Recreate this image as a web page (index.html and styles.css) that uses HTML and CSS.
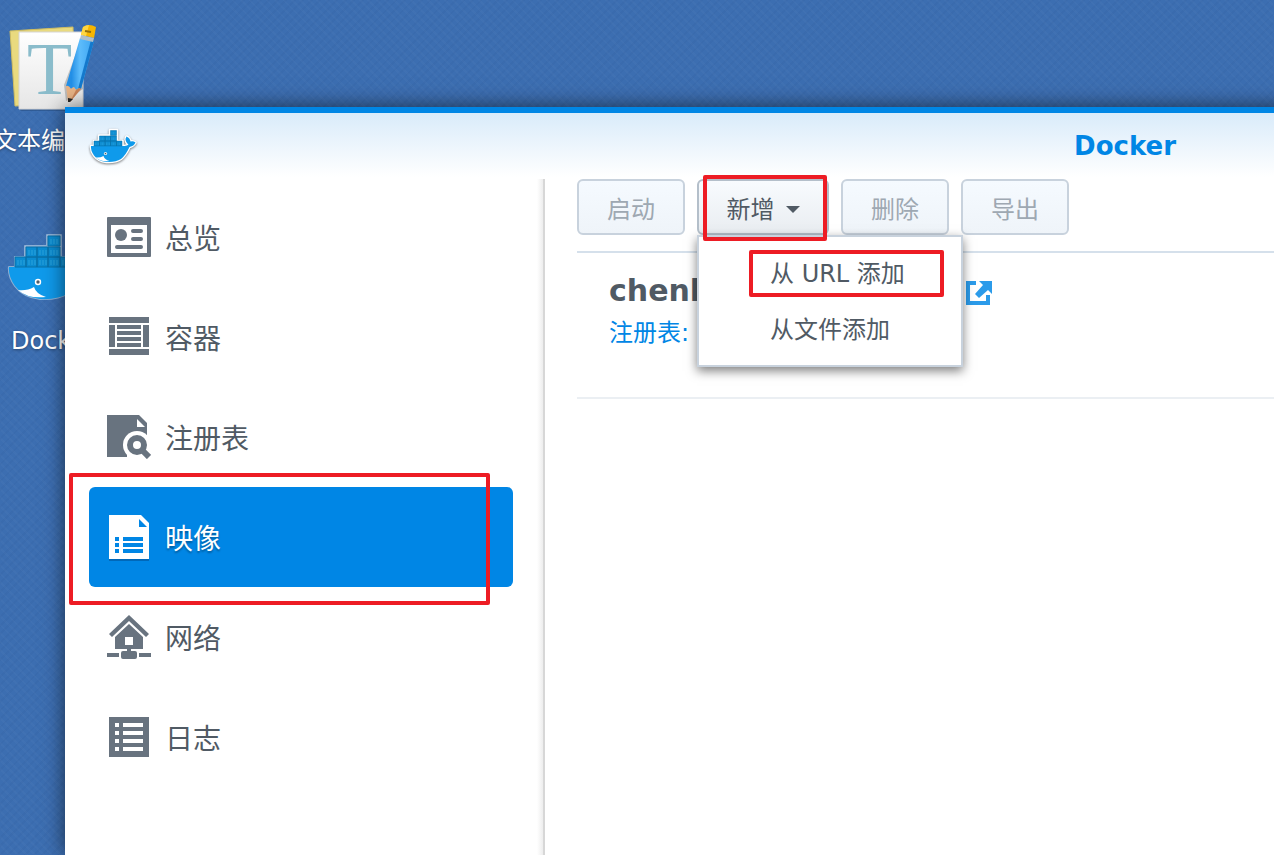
FILE: index.html
```html
<!DOCTYPE html>
<html lang="zh-CN">

<head>
    <meta charset="UTF-8">
    <meta name="viewport" content="width=device-width, initial-scale=1.0">
    <title>Docker</title>
    <link rel="stylesheet" href="styles.css">
</head>

<body>
    <svg class="defs" aria-hidden="true">
        <symbol id="whale" viewBox="-3 -3 96 72">
            <path class="whale-line" d="M39 1H53V23H64V33H68Q74 32 76 30Q67 22 72 14Q79 17 80 24Q85 22 90 26Q87 33 78 35Q70 52 61 59Q50 66 32 65Q15 63 7 52Q0 42 1 33H7V23H17V12H39Z" />
            <path fill="#0f9aeb" d="M1 33H68Q74 32 76 30Q67 22 72 14Q79 17 80 24Q85 22 90 26Q87 33 78 35Q70 52 61 59Q50 66 32 65Q15 63 7 52Q0 42 1 33Z" />
            <path fill="#0b8bd0" stroke="#0870a8" d="M40 2H52V12H40ZM18 13H29V23H18ZM29 13H40V23H29ZM40 13H52V23H40ZM7 23H18V33H7ZM18 23H29V33H18ZM29 23H40V33H29ZM40 23H52V33H40ZM52 23H63V33H52Z" />
            <path stroke="#2ba3dc" d="M43 5V10M46 5V10M49 5V10M21 16V21M24 16V21M27 16V21M32 16V21M35 16V21M38 16V21M43 16V21M46 16V21M49 16V21M10 26V31M13 26V31M16 26V31M21 26V31M24 26V31M27 26V31M32 26V31M35 26V31M38 26V31M43 26V31M46 26V31M49 26V31M55 26V31M58 26V31" />
            <path fill="#fff" d="M10 56Q19 57 26 53Q28 60 38 63Q20 65 10 56Z" />
            <circle cx="30" cy="48" r="3.2" fill="#fff" />
            <circle cx="30" cy="48" r="1.7" fill="#535f68" />
        </symbol>
    </svg>

    <!-- 桌面图标 -->
    <div class="desktop">
        <a class="shortcut" href="#">
            <span class="shortcut-icon">
                <svg width="88" height="88" viewBox="0 0 88 88" aria-hidden="true">
                    <defs>
                        <linearGradient id="paper" x2="0" y2="1">
                            <stop offset="0" stop-color="#fff" />
                            <stop offset="1" stop-color="#e6e6e6" />
                        </linearGradient>
                        <linearGradient id="pen">
                            <stop offset="0.2" stop-color="#238fe6" />
                            <stop offset="0.5" stop-color="#5dbcfb" />
                            <stop offset="1" stop-color="#3ba4f2" />
                        </linearGradient>
                    </defs>
                    <path fill="#234a7c" opacity=".5" d="M8 84L12 88H75V84Z" />
                    <path fill="#e9da7f" stroke="#cfbd62" d="M1 8L64 4L66 80L6 83Z" />
                    <path fill="url(#paper)" stroke="#d5d5d5" d="M10 9H74V86H10Z" />
                    <text class="letter" x="18" y="71">T</text>
                    <path fill="#000" opacity=".2" d="M71 20L55 62L57 78L74 66Z" />
                    <path fill="url(#pen)" d="M71 15L85 18L72 66L67 67L65 64L62 66L57 63Z" />
                    <path fill="#1479cc" d="M82 17L85 18L72 66L69 66Z" />
                    <path fill="#e8b385" d="M57 63Q60 62 62 66Q65 62 67 67Q70 64 72 66L61 79H59Z" />
                    <path fill="#c98358" d="M67 67Q70 64 72 66L61 79Z" />
                    <path fill="#282828" d="M59 75L64 76L61 79H59Z" />
                    <path fill="#f7b500" d="M74 4Q80 0 87 4L85 15L72 12Z" />
                    <path fill="#ffd640" d="M74 4Q77 2 80 2L77 13L72 12Z" />
                    <path fill="#aebfca" d="M72 12L85 15L84 19L71 16Z" />
                    <path stroke="#91700e" stroke-width="2" d="M76 8L82 9" />
                </svg>
            </span>
            <span>文本编辑器</span>
        </a>
        <a class="shortcut" href="#">
            <span class="shortcut-icon">
                <svg class="whale-desktop" width="96" height="72" aria-hidden="true"><use href="#whale" /></svg>
            </span>
            <span>Docker</span>
        </a>
    </div>

    <!-- Docker 窗口 -->
    <div class="window">
        <header class="titlebar">
            <svg class="whale-title" width="48" height="36" aria-hidden="true"><use href="#whale" /></svg>
            <h1>Docker</h1>
        </header>
        <div class="body">
            <nav class="sidebar">
                <a class="nav-item" href="#">
                    <svg width="44" height="44" viewBox="0 0 44 44" aria-hidden="true">
                        <rect y="2" width="44" height="40" rx="1" />
                        <path fill="#fff" d="M4 10H40V38H4Z" />
                        <circle cx="14" cy="20" r="6" />
                        <path stroke="#68737f" stroke-width="4" stroke-linecap="round" d="M26 16H34M26 24H34M10 32H34" />
                    </svg>
                    <span>总览</span>
                </a>
                <a class="nav-item" href="#">
                    <svg width="44" height="44" viewBox="0 0 44 44" aria-hidden="true">
                        <path d="M2 2H42V8H2ZM2 10H8V32H2ZM36 10H42V32H36ZM10 10H34V14H10ZM10 16H34V20H10ZM10 22H34V26H10ZM10 28H34V32H10ZM2 34H42V40H2Z" />
                    </svg>
                    <span>容器</span>
                </a>
                <a class="nav-item" href="#">
                    <svg width="44" height="44" viewBox="0 0 44 44" aria-hidden="true">
                        <path d="M0 0H32L40 8V42H0Z" />
                        <path fill="#fff" d="M30 4V12H38Z" />
                        <circle cx="30" cy="30" r="14" fill="#fff" />
                        <path fill="#fff" d="M20 38L24 42H20ZM36 36L44 40V44H32L24 42Z" />
                        <circle cx="30" cy="30" r="7" fill="none" stroke="#68737f" stroke-width="6" />
                        <path stroke="#68737f" stroke-width="6" d="M34 34L42 42" />
                    </svg>
                    <span>注册表</span>
                </a>
                <a class="nav-item active" href="#">
                    <svg width="44" height="44" viewBox="0 0 44 44" aria-hidden="true">
                        <path d="M2 0H34L42 8V44H2Z" />
                        <path fill="#0086e5" d="M32 4V12H40ZM8 22H12V26H8ZM16 22H36V26H16ZM8 28H12V32H8ZM16 28H36V32H16ZM8 34H12V38H8ZM16 34H36V38H16Z" />
                    </svg>
                    <span>映像</span>
                </a>
                <a class="nav-item" href="#">
                    <svg width="44" height="44" viewBox="0 0 44 44" aria-hidden="true">
                        <path d="M22 0L42 19L39 22L22 6L5 22L2 19Z" />
                        <path d="M22 9L36 22V34H24V36H28Q30 36 30 38V42Q30 44 28 44H16Q14 44 14 42V38Q14 36 16 36H20V34H8V22ZM0 38H12V42H0ZM32 38H44V42H32Z" />
                        <path fill="#fff" d="M18 22H26V30H18Z" />
                    </svg>
                    <span>网络</span>
                </a>
                <a class="nav-item" href="#">
                    <svg width="44" height="44" viewBox="0 0 44 44" aria-hidden="true">
                        <path d="M2 2H42V42H2Z" />
                        <path fill="#fff" d="M8 8H12V12H8ZM16 8H36V12H16ZM8 16H12V20H8ZM16 16H36V20H16ZM8 24H12V28H8ZM16 24H36V28H16ZM8 32H12V36H8ZM16 32H36V36H16Z" />
                    </svg>
                    <span>日志</span>
                </a>
            </nav>
            <main class="content">
                <div class="toolbar">
                    <button class="btn" disabled>启动</button>
                    <div class="dropdown">
                        <button class="btn btn-add">新增<span class="arrow"></span></button>
                        <div class="menu">
                            <button class="menu-item">从 URL 添加</button>
                            <button class="menu-item">从文件添加</button>
                            <div class="mark mark-url"></div>
                        </div>
                        <div class="mark mark-add"></div>
                    </div>
                    <button class="btn" disabled>删除</button>
                    <button class="btn" disabled>导出</button>
                </div>
                <div class="image-row">
                    <div class="image-title">
                        <h2>chenl</h2>
                        <a href="#" aria-label="打开">
                            <svg width="28" height="28" viewBox="0 0 28 28" aria-hidden="true">
                                <path fill="#2b9bea" d="M1 2H11V6H5V22H21V16H25V26H1ZM14 2H27V15L23 11L14 19L10 15L18 6Z" />
                            </svg>
                        </a>
                    </div>
                    <a class="registry" href="#">注册表:</a>
                </div>
            </main>
        </div>
    </div>
    <div class="mark mark-image"></div>
</body>

</html>
```

FILE: styles.css
```css
* {
    box-sizing: border-box;
    padding: 0;
    margin: 0;
}

body {
    position: relative;
    height: 100vh;
    overflow: hidden;
    font-family: "DejaVu Sans", "Noto Sans CJK SC", sans-serif;
    font-size: 24px;
    color: #505a64;
    background-color: #3c6eb1;
    background-image: repeating-linear-gradient(45deg, rgba(255, 255, 255, .02) 0 2px, transparent 2px 6px),
        repeating-linear-gradient(-45deg, rgba(0, 20, 70, .03) 0 2px, transparent 2px 6px);
}

a {
    color: inherit;
    text-decoration: none;
}

button {
    font: inherit;
    color: inherit;
}

.defs {
    position: absolute;
    width: 0;
    height: 0;
}

/* 桌面 */
.desktop {
    display: flex;
    flex-direction: column;
    gap: 62px;
    width: 120px;
    margin-left: -7px;
    padding-top: 19px;
}

.shortcut {
    display: flex;
    flex-direction: column;
    align-items: center;
    gap: 10px;
    line-height: 32px;
    color: #fff;
    white-space: nowrap;
    text-shadow: 0 1px 3px rgba(0, 0, 0, .4);
}

.shortcut-icon {
    display: flex;
    align-items: center;
    height: 96px;
}

.letter {
    font-family: "Liberation Serif", serif;
    font-size: 74px;
    fill: #8abccb;
    text-shadow: none;
}

.whale-desktop {
    --line: #8fb0d4;
    --line-width: 2px;
}

.whale-title {
    --line: #fff;
    --line-width: 5px;
    filter: drop-shadow(0 1px 1px rgba(0, 0, 0, .5));
}

.whale-line {
    fill: var(--line);
    stroke: var(--line);
    stroke-width: var(--line-width);
    stroke-linejoin: round;
}

/* 窗口 */
.window {
    position: absolute;
    top: 107px;
    bottom: 0;
    left: 65px;
    right: -911px;
    display: flex;
    flex-direction: column;
    border-top: 6px solid #0086e5;
    background: linear-gradient(#d9ebfa, #fff 64px);
    box-shadow: 0 0 20px rgba(0, 0, 0, .6);
}

.titlebar {
    display: grid;
    grid-template-columns: 48px 1fr 48px;
    align-items: center;
    height: 66px;
    padding: 0 24px;
}

.titlebar h1 {
    font-size: 26px;
    text-align: center;
    color: #0086e5;
}

.body {
    flex: 1;
    display: flex;
}

/* 左侧导航 */
.sidebar {
    width: 480px;
    padding: 8px 30px 0 24px;
    border-right: 2px solid #d7d7d7;
    background: linear-gradient(to left, #ededed, transparent 6px);
}

.nav-item {
    display: flex;
    align-items: center;
    gap: 14px;
    height: 100px;
    padding: 0 18px;
    border-radius: 6px;
    font-size: 28px;
}

.nav-item svg {
    fill: #68737f;
}

.nav-item.active {
    color: #fff;
    background-color: #0086e5;
    text-shadow: 0 2px 2px rgba(0, 0, 0, .3);
}

.nav-item.active svg {
    fill: #fff;
    filter: drop-shadow(0 2px 0 rgba(0, 60, 120, .4));
}

/* 右侧内容 */
.content {
    flex: 1;
    padding-left: 32px;
}

.toolbar {
    display: flex;
    gap: 12px;
    padding-bottom: 16px;
    border-bottom: 2px solid #d5e0eb;
}

.btn {
    display: flex;
    align-items: center;
    justify-content: center;
    width: 108px;
    height: 56px;
    border: 2px solid #b4bfca;
    border-radius: 6px;
    background: linear-gradient(#f8fbfe, #e9edf1);
}

.btn:disabled {
    color: #9ea8b2;
    border-color: #c8d2dd;
    background: linear-gradient(#f5faff, #eff4f9);
}

.btn-add {
    gap: 11px;
    width: 132px;
}

.arrow {
    margin-top: 4px;
    border: 7px solid transparent;
    border-top-color: #505a64;
    border-bottom: 0;
}

.dropdown {
    position: relative;
}

.menu {
    position: absolute;
    z-index: 1;
    top: 56px;
    left: 0;
    width: 266px;
    padding: 8px 0;
    border: 2px solid #c8d2dd;
    background-color: #fff;
    box-shadow: 0 4px 10px rgba(0, 0, 0, .5);
}

.menu-item {
    display: block;
    width: 100%;
    height: 56px;
    padding: 0 0 4px 71px;
    border: 0;
    background: none;
    text-align: left;
}

.image-row {
    height: 146px;
    padding: 20px 32px 0;
    border-bottom: 2px solid #ebeff3;
}

.image-title {
    display: flex;
    align-items: center;
    height: 40px;
}

.image-title a {
    display: flex;
}

.image-title h2 {
    width: 356px;
    padding-bottom: 6px;
    font-size: 30px;
}

.registry {
    display: block;
    line-height: 40px;
    color: #0086e5;
}

/* 红色标注框 */
.mark {
    position: absolute;
    z-index: 2;
    border: 4px solid #ed1c24;
    border-radius: 2px;
    pointer-events: none;
}

.mark-add {
    top: -4px;
    left: 6px;
    width: 124px;
    height: 66px;
}

.mark-url {
    top: 13px;
    left: 50px;
    width: 195px;
    height: 47px;
}

.mark-image {
    top: 473px;
    left: 69px;
    width: 421px;
    height: 132px;
}
```
